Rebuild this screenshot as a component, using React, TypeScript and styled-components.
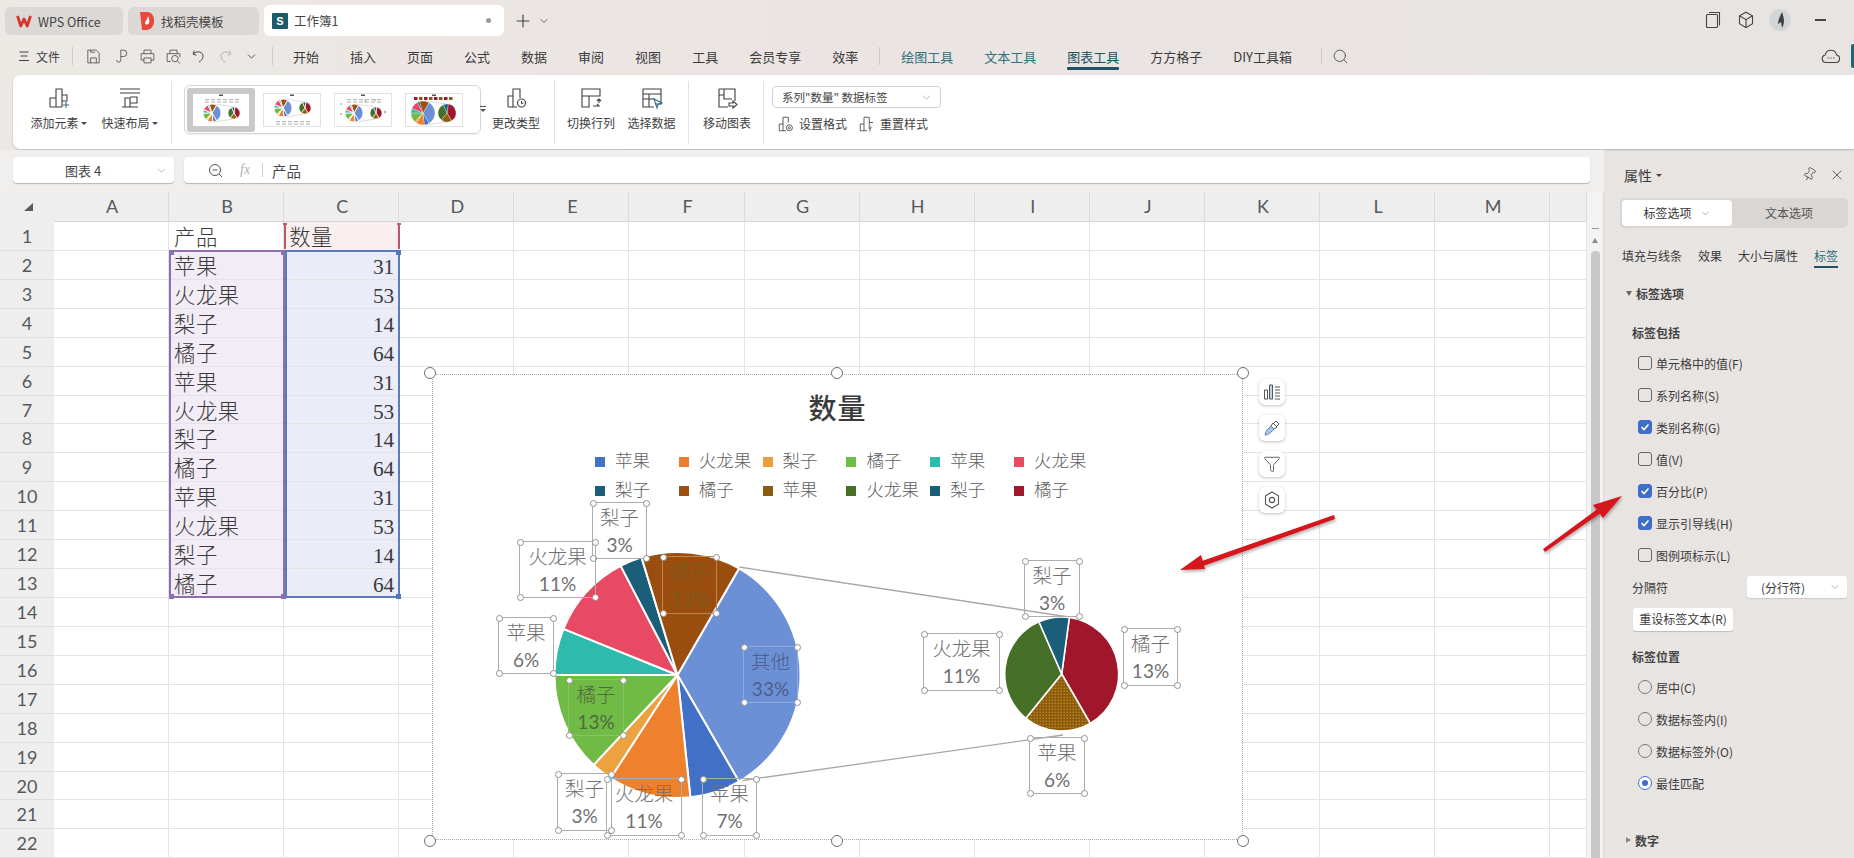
import React from "react";
import styled, { createGlobalStyle } from "styled-components";
import { ChevronDown, Plus, Search, X, Pin, Funnel } from "lucide-react";

const CJK = `"Noto Sans CJK SC", "Noto Sans", sans-serif`;
const SHEET_FONT = `"Liberation Serif", "Noto Sans CJK SC", serif`;
const LABEL_FONT = `Lato, "Noto Sans CJK SC", sans-serif`;

const GlobalStyle = createGlobalStyle`
  html, body { margin: 0; padding: 0; overflow: hidden; }
  body { font-family: ${CJK}; color: #333; }
`;

const Page = styled.div`
  position: relative;
  width: 1854px;
  height: 858px;
  overflow: hidden;
  display: flex;
  flex-direction: column;
  background: linear-gradient(90deg, #ece9e5 0%, #ebe4e2 45%, #e7e4e2 100%);
`;

/* title bar */
const TitleBar = styled.div`
  height: 40px;
  flex: none;
  display: flex;
  align-items: flex-start;
  padding: 6px 24px 0 5px;
  box-sizing: border-box;
`;

const Tab = styled.div<{ $w: number; $active?: boolean }>`
  width: ${(p) => p.$w}px;
  height: ${(p) => (p.$active ? 31 : 28)}px;
  margin: ${(p) => (p.$active ? "-1px 0 0 5px" : "1px 0 0 5px")};
  background: ${(p) => (p.$active ? "#fff" : "#dcd8d5")};
  border-radius: 6px;
  display: flex;
  align-items: center;
  gap: 6px;
  padding-left: ${(p) => (p.$active ? 8 : 11)}px;
  box-sizing: border-box;
  font-size: 12.5px;
  color: #444;
  &:first-child { margin-left: 0; }
`;

const SheetBadge = styled.div`
  width: 16px;
  height: 16px;
  background: #1c5b6b;
  color: #fff;
  font: 700 11px/16px "Liberation Sans", sans-serif;
  text-align: center;
  border-radius: 1px;
`;

const UnsavedDot = styled.span`
  width: 5px;
  height: 5px;
  border-radius: 50%;
  background: #9a9a9a;
  margin-left: auto;
  margin-right: 13px;
`;

const NewTab = styled.div`
  display: flex;
  align-items: center;
  gap: 5px;
  height: 30px;
  margin-left: 9px;
  color: #444;
`;

const WindowTools = styled.div`
  margin-left: auto;
  height: 28px;
  display: flex;
  align-items: center;
  color: #444;
`;

const WindowCell = styled.div<{ $w: number; $gap: number }>`
  width: ${(p) => p.$w}px;
  margin-left: ${(p) => p.$gap}px;
  display: flex;
  justify-content: center;
`;

const Avatar = styled.div`
  width: 22px;
  height: 22px;
  border-radius: 50%;
  background: #d3d6d6;
  display: flex;
  align-items: center;
  justify-content: center;
`;

const Minimize = styled.div`
  width: 11px;
  height: 1.5px;
  background: #444;
`;

/* menu bar */
const MenuBar = styled.div`
  height: 35px;
  flex: none;
  display: flex;
  align-items: center;
  padding: 0 0 3px 18px;
  box-sizing: border-box;
  font-size: 13px;
  color: #3c3c3c;
`;

const FileText = styled.span`
  font-size: 12px;
  margin-left: 6px;
`;

const MenuDivider = styled.div<{ $left: number; $right: number }>`
  width: 1px;
  height: 18px;
  background: #cfcac7;
  margin: 0 ${(p) => p.$right}px 0 ${(p) => p.$left}px;
`;

const QuickIcon = styled.div<{ $disabled?: boolean; $nudge?: number }>`
  width: 26px;
  margin-left: ${(p) => p.$nudge || 0}px;
  display: flex;
  justify-content: center;
  color: ${(p) => (p.$disabled ? "#b5b1ae" : "#444")};
`;

const MenuItem = styled.div<{ $tool?: boolean; $active?: boolean }>`
  position: relative;
  margin-right: 31px;
  white-space: nowrap;
  color: ${(p) => (p.$active ? "#17505f" : p.$tool ? "#2f7280" : "#3c3c3c")};
  ${(p) =>
    p.$active &&
    `&::after { content: ""; position: absolute; left: 0; right: 0; bottom: -4px; height: 2.5px; background: #1f5364; border-radius: 1px; }`}
`;

const CloudSlot = styled.div`
  margin-left: auto;
  display: flex;
  align-items: center;
  gap: 10px;
  color: #444;
`;

const CornerButton = styled.div`
  width: 3px;
  height: 24px;
  background: #1c6b75;
  border-radius: 2px 0 0 2px;
`;

/* ribbon */
const Ribbon = styled.div`
  height: 74px;
  flex: none;
  margin-left: 13px;
  padding: 6px 0 5px 10px;
  box-sizing: border-box;
  background: #fff;
  border-radius: 7px 0 0 7px;
  box-shadow: 0 1px 2px rgba(0, 0, 0, 0.22);
  display: flex;
  align-items: stretch;
`;

const BigButton = styled.div<{ $w: number }>`
  width: ${(p) => p.$w}px;
  display: flex;
  flex-direction: column;
  align-items: center;
  padding-top: 5px;
  color: #3e3e3e;
`;

const BigLabel = styled.div`
  margin-top: 4px;
  font-size: 12px;
  line-height: 18px;
  white-space: nowrap;
  display: flex;
  align-items: center;
  gap: 2px;
`;

const Caret = styled.span`
  width: 0;
  height: 0;
  border: 3px solid transparent;
  border-top: 3.5px solid #444;
  margin-top: 3px;
`;

const RibbonDivider = styled.div<{ $left: number; $right: number }>`
  width: 1px;
  background: #e2e2e2;
  margin: 0 ${(p) => p.$right}px 0 ${(p) => p.$left}px;
`;

const StyleGallery = styled.div`
  width: 297px;
  height: 49px;
  margin-top: 4px;
  box-sizing: border-box;
  border: 1px solid #d5d5d5;
  border-radius: 6px;
  display: flex;
  align-items: center;
  padding-left: 2px;
  box-shadow: 0 1px 1px rgba(0, 0, 0, 0.06);
`;

const Thumb = styled.div<{ $selected?: boolean }>`
  width: 56px;
  height: 32px;
  flex: none;
  box-sizing: content-box;
  border: ${(p) => (p.$selected ? "6px solid #c9c9c9" : "1px solid #e2e2e2")};
  border-radius: ${(p) => (p.$selected ? 3 : 0)}px;
  margin-right: ${(p) => (p.$selected ? 8 : 13)}px;
  background: #fff;
`;

const GalleryMore = styled.div`
  margin-left: 4px;
  width: 7px;
  height: 6px;
  border-top: 1px solid #555;
  display: flex;
  justify-content: center;
  &::after {
    content: "";
    margin-top: 1.5px;
    border: 3px solid transparent;
    border-top: 3.5px solid #555;
  }
`;

const SeriesColumn = styled.div`
  width: 170px;
  margin-top: 5px;
  display: flex;
  flex-direction: column;
  gap: 6px;
`;

const SeriesSelect = styled.div`
  height: 22px;
  width: 169px;
  box-sizing: border-box;
  background: #fff;
  border: 1px solid #d2d2d2;
  border-radius: 4px;
  font-size: 11.5px;
  line-height: 20px;
  padding: 0 7px 0 9px;
  display: flex;
  align-items: center;
  justify-content: space-between;
  color: #444;
`;

const SmallActions = styled.div`
  display: flex;
  font-size: 12px;
  line-height: 20px;
  color: #3e3e3e;
  padding-left: 5px;
`;

const SmallAction = styled.div<{ $w: number }>`
  width: ${(p) => p.$w}px;
  display: flex;
  align-items: center;
  gap: 4px;
  white-space: nowrap;
`;

/* body */
const Body = styled.div`
  flex: 1;
  min-height: 0;
  margin-top: 1px;
  display: grid;
  grid-template-columns: 1604px 250px;
`;

const Workspace = styled.div`
  display: flex;
  flex-direction: column;
  min-width: 0;
  background: #f1efee;
`;

const FormulaRow = styled.div`
  height: 42px;
  flex: none;
  padding: 7px 14px 9px 13px;
  box-sizing: border-box;
  display: flex;
  gap: 10px;
  font-size: 13px;
`;

const NameBox = styled.div`
  width: 161px;
  background: #fff;
  border-radius: 4px;
  box-shadow: 0 1px 1px rgba(0, 0, 0, 0.25);
  display: flex;
  align-items: center;
  padding: 0 6px 0 52px;
  box-sizing: border-box;
  justify-content: space-between;
  color: #444;
`;

const FormulaInput = styled.div`
  flex: 1;
  background: #fff;
  border-radius: 4px;
  box-shadow: 0 1px 1px rgba(0, 0, 0, 0.25);
  display: flex;
  align-items: center;
  padding-left: 24px;
  color: #555;
`;

const Fx = styled.span`
  font: italic 14px "Liberation Serif", serif;
  color: #b3b3b3;
  margin-left: 17px;
`;

const FormulaDivider = styled.span`
  width: 1px;
  height: 14px;
  background: #cfcfcf;
  margin: 0 9px 0 12px;
`;

const FormulaText = styled.span`
  font-size: 14.5px;
  color: #4a4a4a;
`;

const SheetWrap = styled.div`
  flex: 1;
  display: flex;
  min-height: 0;
`;

const Sheet = styled.div`
  position: relative;
  width: 1587px;
  flex: none;
  display: grid;
  grid-template-columns: 54px repeat(13, 115.1px) 36.7px;
  grid-template-rows: 30px repeat(22, 28.93px);
  background: #fff;
`;

const Corner = styled.div`
  background: #eeeeee;
  display: flex;
  align-items: center;
  justify-content: center;
  &::after {
    content: "";
    width: 0;
    height: 0;
    margin-left: 2px;
    border-style: solid;
    border-width: 0 0 8px 9px;
    border-color: transparent transparent #5c5c5c transparent;
  }
`;

const ColHead = styled.div`
  background: #eeeeee;
  border-right: 1px solid #dcdcdc;
  border-bottom: 1px solid #d5d5d5;
  box-sizing: border-box;
  font: 400 18px/29px Lato, sans-serif;
  color: #55595c;
  text-align: center;
  padding-left: 2px;
`;

const RowHead = styled.div`
  background: #eeeeee;
  border-bottom: 1px solid #dedede;
  box-sizing: border-box;
  font: 400 18px/29px Lato, sans-serif;
  color: #55595c;
  text-align: center;
`;

const Cell = styled.div<{ $bg?: string; $right?: boolean }>`
  background: ${(p) => p.$bg || "#fff"};
  border-right: 1px solid #e4e4e4;
  border-bottom: 1px solid #e4e4e4;
  box-sizing: border-box;
  font: 300 21.33px/28px ${SHEET_FONT};
  letter-spacing: ${(p) => (p.$right ? 0 : 0.5)}px;
  color: #3a3a3a;
  padding: 2px ${(p) => (p.$right ? 4 : 5)}px 0 5px;
  white-space: nowrap;
  text-align: ${(p) => (p.$right ? "right" : "left")};
`;

const Selection = styled.div<{ $x: number; $y: number; $w: number; $h: number; $color: string }>`
  position: absolute;
  left: ${(p) => p.$x}px;
  top: ${(p) => p.$y}px;
  width: ${(p) => p.$w}px;
  height: ${(p) => p.$h}px;
  box-sizing: border-box;
  border: 2px solid ${(p) => p.$color};
`;

const CornerHandle = styled.i<{ $x: string; $y: string; $color: string }>`
  position: absolute;
  left: ${(p) => p.$x};
  top: ${(p) => p.$y};
  width: 5px;
  height: 5px;
  margin: -2.5px 0 0 -2.5px;
  background: ${(p) => p.$color};
`;

const RedTick = styled.div<{ $x: number }>`
  position: absolute;
  left: ${(p) => p.$x}px;
  top: 31px;
  width: 2px;
  height: 26px;
  background: #b9566b;
  &::before {
    content: "";
    position: absolute;
    left: -1px;
    top: 0;
    width: 4px;
    height: 2px;
    background: #c9566b;
  }
`;

const ScrollTrack = styled.div`
  width: 17px;
  flex: none;
  background: #f3f3f3;
  border-right: 1px solid #dcdad8;
  box-sizing: border-box;
  display: flex;
  flex-direction: column;
  align-items: center;
  padding-top: 36px;
`;

const ScrollMinus = styled.div`
  width: 7px;
  height: 1px;
  background: #9a9a9a;
`;

const ScrollUp = styled.div`
  margin-top: 9px;
  border: 3.5px solid transparent;
  border-bottom: 5px solid #8a8a8a;
  border-top: 0;
`;

const ScrollThumb = styled.div`
  margin-top: 8px;
  flex: 1;
  width: 9px;
  border-radius: 4px 4px 0 0;
  background: #c8c8c8;
`;

/* chart */
const ChartBox = styled.div`
  position: absolute;
  left: 433px;
  top: 183px;
  width: 809px;
  height: 464px;
  box-sizing: border-box;
  background: #fff;
  outline: 1.5px dotted #a9a9a9;
  display: flex;
  flex-direction: column;
  align-items: flex-start;
`;

const ChartTitle = styled.div`
  width: 100%;
  margin-top: 15px;
  text-align: center;
  font: 500 28px/40px ${SHEET_FONT};
  color: #3b3b3b;
  letter-spacing: 1px;
`;

const Legend = styled.div`
  margin: 17px 0 0 162px;
  display: grid;
  grid-template-columns: repeat(6, 83.8px);
  grid-auto-rows: 29px;
  font: 300 17.5px/29px ${SHEET_FONT};
  color: #606060;
`;

const LegendItem = styled.div`
  display: flex;
  align-items: center;
  gap: 10px;
  white-space: nowrap;
`;

const Swatch = styled.span<{ $color: string }>`
  width: 10px;
  height: 10px;
  flex: none;
  background: ${(p) => p.$color};
`;

const ChartArt = styled.svg`
  position: absolute;
  left: 0;
  top: 0;
  width: 809px;
  height: 464px;
  overflow: visible;
`;

const SizeHandle = styled.div<{ $x: number; $y: number }>`
  position: absolute;
  left: ${(p) => p.$x}px;
  top: ${(p) => p.$y}px;
  width: 12px;
  height: 12px;
  box-sizing: border-box;
  margin: -6px 0 0 -6px;
  border-radius: 50%;
  background: #fff;
  border: 1px solid #6f6f6f;
`;

const DataLabel = styled.div<{ $x: number; $y: number; $w: number; $h: number; $tone: string; $line: string }>`
  position: absolute;
  left: ${(p) => p.$x}px;
  top: ${(p) => p.$y}px;
  width: ${(p) => p.$w}px;
  height: ${(p) => p.$h}px;
  box-sizing: border-box;
  padding-top: 2px;
  border: 1px solid ${(p) => p.$line};
  display: flex;
  flex-direction: column;
  align-items: center;
  justify-content: center;
  color: ${(p) => p.$tone};
  white-space: nowrap;
`;

const LabelName = styled.div`
  font: 300 19.5px/26px ${SHEET_FONT};
`;

const LabelValue = styled.div`
  font: 400 19px/26px ${LABEL_FONT};
`;

const LabelDot = styled.i<{ $x: string; $y: string }>`
  position: absolute;
  left: ${(p) => p.$x};
  top: ${(p) => p.$y};
  width: 7px;
  height: 7px;
  box-sizing: border-box;
  margin: -3.5px 0 0 -3.5px;
  border-radius: 50%;
  background: #fff;
  border: 1px solid #8f8f8f;
`;

const ChartTools = styled.div`
  position: absolute;
  left: 1259px;
  top: 187px;
  display: flex;
  flex-direction: column;
  gap: 10px;
`;

const ChartTool = styled.div`
  width: 26px;
  height: 26px;
  background: #fff;
  border-radius: 6px;
  box-shadow: 0 1px 3px rgba(0, 0, 0, 0.25);
  display: flex;
  align-items: center;
  justify-content: center;
  color: #4d4d4d;
`;

/* properties panel */
const Panel = styled.aside`
  display: flex;
  flex-direction: column;
  padding: 10px 6px 0 16px;
  font-size: 12px;
  color: #3a3a3a;
`;

const PanelHead = styled.div`
  height: 30px;
  flex: none;
  display: flex;
  align-items: center;
  padding-left: 4px;
  font-size: 14px;
  gap: 4px;
`;

const PanelHeadTools = styled.div`
  margin-left: auto;
  display: flex;
  gap: 12px;
  padding-right: 3px;
  color: #444;
`;

const PinIcon = styled(Pin)`
  transform: rotate(30deg);
`;

const Segment = styled.div`
  margin-top: 8px;
  height: 30px;
  width: 228px;
  flex: none;
  background: #d9d6d4;
  border-radius: 5px;
  padding: 2px;
  box-sizing: border-box;
  display: flex;
  color: #555;
  line-height: 26px;
`;

const SegmentOn = styled.div`
  width: 110px;
  background: #fff;
  border-radius: 4px;
  color: #333;
  display: flex;
  align-items: center;
  justify-content: center;
  gap: 8px;
`;

const SegmentOff = styled.div`
  flex: 1;
  text-align: center;
`;

const SubTabs = styled.div`
  margin-top: 7px;
  height: 40px;
  flex: none;
  display: flex;
  align-items: center;
  padding-left: 2px;
  gap: 16px;
`;

const SubTab = styled.div<{ $on?: boolean }>`
  position: relative;
  white-space: nowrap;
  color: ${(p) => (p.$on ? "#1f6a78" : "#3a3a3a")};
  ${(p) =>
    p.$on &&
    `&::after { content: ""; position: absolute; left: 0; right: 0; bottom: -4px; height: 2px; background: #1f5364; }`}
`;

const SectionHead = styled.div<{ $top: number }>`
  margin-top: ${(p) => p.$top}px;
  height: 20px;
  flex: none;
  display: flex;
  align-items: center;
  gap: 4px;
  padding-left: 6px;
  font-weight: 700;
  color: #444;
`;

const Triangle = styled.span<{ $open?: boolean }>`
  width: 0;
  height: 0;
  ${(p) =>
    p.$open
      ? "border-left: 3.5px solid transparent; border-right: 3.5px solid transparent; border-top: 5px solid #666;"
      : "border-top: 3.5px solid transparent; border-bottom: 3.5px solid transparent; border-left: 5px solid #888;"}
`;

const GroupHead = styled.div<{ $top: number }>`
  margin-top: ${(p) => p.$top}px;
  height: 20px;
  flex: none;
  line-height: 20px;
  padding-left: 12px;
  font-weight: 700;
  color: #444;
`;

const OptionList = styled.div`
  margin-top: 4px;
  flex: none;
  display: flex;
  flex-direction: column;
`;

const Option = styled.div`
  height: 32px;
  display: flex;
  align-items: center;
  gap: 4px;
  padding-left: 18px;
  white-space: nowrap;
`;

const Check = styled.span<{ $on?: boolean }>`
  width: 14px;
  height: 14px;
  box-sizing: border-box;
  flex: none;
  border-radius: 3px;
  border: 1px solid ${(p) => (p.$on ? "#3d6fc6" : "#666")};
  background: ${(p) => (p.$on ? "#3d6fc6" : "transparent")};
  display: flex;
  align-items: center;
  justify-content: center;
`;

const Radio = styled.span<{ $on?: boolean }>`
  width: 14px;
  height: 14px;
  box-sizing: border-box;
  flex: none;
  border-radius: 50%;
  border: 1px solid ${(p) => (p.$on ? "#3d6fc6" : "#777")};
  background: ${(p) => (p.$on ? "#fff" : "transparent")};
  display: flex;
  align-items: center;
  justify-content: center;
  &::after {
    content: "";
    width: 6px;
    height: 6px;
    border-radius: 50%;
    background: ${(p) => (p.$on ? "#3d6fc6" : "transparent")};
  }
`;

const SeparatorRow = styled.div`
  margin-top: 5px;
  height: 22px;
  flex: none;
  padding-left: 12px;
  display: flex;
  align-items: center;
  justify-content: space-between;
  padding-right: 1px;
`;

const SeparatorSelect = styled.div`
  width: 100px;
  height: 22px;
  background: #fff;
  border-radius: 3px;
  box-shadow: 0 1px 1px rgba(0, 0, 0, 0.12);
  display: flex;
  align-items: center;
  justify-content: space-between;
  padding: 0 6px 0 14px;
  box-sizing: border-box;
`;

const ResetButton = styled.div`
  margin: 10px 0 0 13px;
  width: 100px;
  height: 23px;
  flex: none;
  background: #fff;
  border-radius: 3px;
  box-shadow: 0 1px 1px rgba(0, 0, 0, 0.18);
  text-align: center;
  line-height: 22px;
`;

const Annotations = styled.svg`
  position: absolute;
  left: 0;
  top: 0;
  width: 1854px;
  height: 858px;
  pointer-events: none;
`;

/* drawing helpers */
const pt = (cx: number, cy: number, r: number, deg: number) => {
  const a = (deg * Math.PI) / 180;
  return [cx + r * Math.sin(a), cy - r * Math.cos(a)];
};

const wedge = (cx: number, cy: number, r: number, from: number, to: number) => {
  const [x1, y1] = pt(cx, cy, r, from);
  const [x2, y2] = pt(cx, cy, r, to);
  const large = to - from > 180 ? 1 : 0;
  return `M${cx} ${cy}L${x1.toFixed(2)} ${y1.toFixed(2)}A${r} ${r} 0 ${large} 1 ${x2.toFixed(2)} ${y2.toFixed(2)}Z`;
};

type Slice = { from: number; to: number; fill: string };

const mainSlices: Slice[] = [
  { from: 30, to: 150, fill: "#6c90d5" },
  { from: 150, to: 174, fill: "#4170c6" },
  { from: 174, to: 213, fill: "#ee812e" },
  { from: 213, to: 223, fill: "#eba23f" },
  { from: 223, to: 270, fill: "#70bb45" },
  { from: 270, to: 292, fill: "#2ebbae" },
  { from: 292, to: 332.5, fill: "#e94a63" },
  { from: 332.5, to: 343, fill: "#1b5e7a" },
  { from: 343, to: 390, fill: "url(#brownDots)" },
];

const subSlices: Slice[] = [
  { from: 7.7, to: 150, fill: "#a0162a" },
  { from: 150, to: 219, fill: "url(#goldDots)" },
  { from: 219, to: 336.5, fill: "#467028" },
  { from: 336.5, to: 367.7, fill: "#1b5e7a" },
];

const flat = (list: Slice[]) =>
  list.map((s) => ({ ...s, fill: s.fill === "url(#brownDots)" ? "#9c4f0e" : s.fill === "url(#goldDots)" ? "#8f5f10" : s.fill }));

const Pie = ({ cx, cy, r, slices, gap }: { cx: number; cy: number; r: number; slices: Slice[]; gap: number }) => (
  <g stroke="#fff" strokeWidth={gap} strokeLinejoin="round">
    {slices.map((s, i) => (
      <path key={i} d={wedge(cx, cy, r, s.from, s.to)} fill={s.fill} />
    ))}
  </g>
);

const legendRows = [
  ["苹果", "#4472c4"],
  ["火龙果", "#ed7d31"],
  ["梨子", "#eba03e"],
  ["橘子", "#6fbd44"],
  ["苹果", "#2ebbae"],
  ["火龙果", "#e94a63"],
  ["梨子", "#1b5e7a"],
  ["橘子", "#9c4f0e"],
  ["苹果", "#8a5a0e"],
  ["火龙果", "#467028"],
  ["梨子", "#1b5e7a"],
  ["橘子", "#a0162a"],
];

const GREY = "#707070";
const LINE = "#adadad";

// page coordinates read off the reference, moved into the chart below
const chartLabels = [
  { name: "梨子", pct: "3%", x: 592, y: 502, w: 55, h: 57, tone: GREY, line: LINE },
  { name: "火龙果", pct: "11%", x: 519, y: 541, w: 77, h: 57, tone: GREY, line: LINE },
  { name: "橘子", pct: "13%", x: 662, y: 556, w: 55, h: 58, tone: "#7d5a1e", line: "#b98a4e" },
  { name: "苹果", pct: "6%", x: 498, y: 617, w: 56, h: 57, tone: GREY, line: LINE },
  { name: "橘子", pct: "13%", x: 568, y: 679, w: 56, h: 57, tone: "#4f6b3d", line: "#8dc26b" },
  { name: "其他", pct: "33%", x: 743, y: 646, w: 55, h: 57, tone: "#4a5f8c", line: "#8eaae0" },
  { name: "梨子", pct: "3%", x: 557, y: 773, w: 55, h: 58, tone: GREY, line: LINE },
  { name: "火龙果", pct: "11%", x: 606, y: 778, w: 76, h: 58, tone: GREY, line: LINE },
  { name: "苹果", pct: "7%", x: 702, y: 778, w: 55, h: 58, tone: GREY, line: LINE },
  { name: "梨子", pct: "3%", x: 1024, y: 560, w: 56, h: 57, tone: GREY, line: LINE },
  { name: "火龙果", pct: "11%", x: 923, y: 633, w: 77, h: 58, tone: GREY, line: LINE },
  { name: "橘子", pct: "13%", x: 1123, y: 628, w: 55, h: 58, tone: GREY, line: LINE },
  { name: "苹果", pct: "6%", x: 1029, y: 737, w: 56, h: 57, tone: GREY, line: LINE },
];

const sheetRows: [string, number][] = [
  ["苹果", 31],
  ["火龙果", 53],
  ["梨子", 14],
  ["橘子", 64],
  ["苹果", 31],
  ["火龙果", 53],
  ["梨子", 14],
  ["橘子", 64],
  ["苹果", 31],
  ["火龙果", 53],
  ["梨子", 14],
  ["橘子", 64],
];

const COLUMNS = ["A", "B", "C", "D", "E", "F", "G", "H", "I", "J", "K", "L", "M", ""];

const Stroke = ({ size = 24, children }: { size?: number; children: React.ReactNode }) => (
  <svg width={size} height={size} viewBox="0 0 24 24" fill="none" stroke="currentColor" strokeWidth={1.1}>
    {children}
  </svg>
);

const MiniChart = ({ variant }: { variant: number }) => {
  const big = variant === 3;
  const cxL = big ? 17 : 19;
  const cxR = 41;
  const cy = variant === 1 ? 14 : 19;
  const rL = big ? 12 : 9;
  const rR = big ? 9 : 6;
  return (
    <svg width="56" height="32" viewBox="0 0 56 32">
      <rect x="26" y="0.5" width="4" height="1.5" fill="#555" />
      {variant !== 3 && (
        <g fill="#b9b9b9">
          {[12, 18, 24, 30, 36, 42].map((x) => (
            <rect key={x} x={x} y={variant === 1 ? 27 : 5} width="4" height="1.2" />
          ))}
          {[12, 18, 24, 30, 36, 42].map((x) => (
            <rect key={x} x={x} y={variant === 1 ? 29.5 : 7.5} width="4" height="1.2" />
          ))}
        </g>
      )}
      {big && (
        <g>
          {[8, 13, 18, 23, 28, 33, 38, 43].map((x, i) => (
            <rect key={x} x={x} y="3" width="3.5" height="3" fill={i % 2 ? "#8a5a0e" : "#a0162a"} />
          ))}
        </g>
      )}
      <path d={`M${cxL + 2} ${cy - rL}L${cxR} ${cy - rR}M${cxL + 2} ${cy + rL}L${cxR} ${cy + rR}`} stroke="#bbb" strokeWidth="0.5" />
      <Pie cx={cxL} cy={cy} r={rL} slices={flat(mainSlices)} gap={variant === 3 ? 0.3 : 0.9} />
      <Pie cx={cxR} cy={cy} r={rR} slices={flat(subSlices)} gap={variant === 3 ? 0.3 : 0.7} />
      {variant === 2 && (
        <g fill="#9fb4d8">
          <circle cx="6" cy="10" r="1" />
          <circle cx="6" cy="20" r="1" />
          <circle cx="30" cy="7" r="1" />
          <circle cx="50" cy="18" r="1.2" />
          <circle cx="40" cy="6" r="1" />
        </g>
      )}
    </svg>
  );
};

const App = () => {
  return (
    <Page>
      <GlobalStyle />
      <TitleBar>
        <Tab $w={118}>
          <svg width="16" height="14" viewBox="0 0 16 14">
            <path d="M1.5 2 L4.8 12 L8 5 L11.2 12 L14.5 2" fill="none" stroke="#d8352b" strokeWidth="2.8" strokeLinejoin="round" />
          </svg>
          <span>WPS Office</span>
        </Tab>
        <Tab $w={131}>
          <svg width="16" height="20" viewBox="0 0 16 20">
            <path d="M1 1h7c5 0 7 4 7 9s-3 9-8 9H3z" fill="#e5493a" />
            <path d="M9 5c0 3-3 5-3 7 0 2 3 2 4 0 1-2 0-5-1-7z" fill="#fff" />
          </svg>
          <span>找稻壳模板</span>
        </Tab>
        <Tab $w={240} $active>
          <SheetBadge>S</SheetBadge>
          <span>工作簿1</span>
          <UnsavedDot />
        </Tab>
        <NewTab>
          <Plus size={20} strokeWidth={1.4} />
          <ChevronDown size={12} strokeWidth={1.6} />
        </NewTab>
        <WindowTools>
          <WindowCell $w={20} $gap={0}>
            <svg width="16" height="18" viewBox="0 0 16 18" fill="none" stroke="currentColor" strokeWidth="1.1">
              <rect x="1.5" y="3.5" width="11" height="13" rx="1" />
              <path d="M4 1.5h10.5v13" />
            </svg>
          </WindowCell>
          <WindowCell $w={20} $gap={13}>
            <svg width="16" height="18" viewBox="0 0 16 18" fill="none" stroke="currentColor" strokeWidth="1.1">
              <path d="M8 1.2l6.5 3.6v8L8 16.6l-6.5-3.8v-8zM1.5 4.8L8 8.6l6.5-3.8M8 8.6v8" />
            </svg>
          </WindowCell>
          <WindowCell $w={24} $gap={12}>
            <Avatar>
              <svg width="14" height="18" viewBox="0 0 14 18">
                <path d="M9 1c1 3 2 6 2 9s-1 5-2 7l-1-6-3 2c0-4 2-8 4-12z" fill="#3f4245" />
              </svg>
            </Avatar>
          </WindowCell>
          <WindowCell $w={20} $gap={18}>
            <Minimize />
          </WindowCell>
        </WindowTools>
      </TitleBar>

      <MenuBar>
        <svg width="12" height="12" viewBox="0 0 12 12" stroke="#444" strokeWidth="1.1">
          <path d="M1.5 2h9M2.5 6h7M1 10.5h10" />
        </svg>
        <FileText>文件</FileText>
        <MenuDivider $left={12} $right={7} />
        <QuickIcon>
          <Stroke size={17}>
            <path d="M4 3h12l4 4v14H4zM8 21v-7h8v7M8 3v3h6" />
          </Stroke>
        </QuickIcon>
        <QuickIcon $nudge={2}>
          <Stroke size={17}>
            <path d="M11 3h4a4 4 0 010 9h-4zM11 12v5a3 3 0 01-6 0" />
          </Stroke>
        </QuickIcon>
        <QuickIcon>
          <Stroke size={17}>
            <path d="M7 8V3h10v5M3 8h18v9h-4M7 17H3V8M7 14h10v7H7z" />
          </Stroke>
        </QuickIcon>
        <QuickIcon>
          <Stroke size={17}>
            <path d="M7 8V3h10v5M3 8h18v5M8 19H3V8" />
            <circle cx="14" cy="15" r="4.5" />
            <path d="M17.5 18.5L21 22" />
          </Stroke>
        </QuickIcon>
        <QuickIcon>
          <Stroke size={16}>
            <path d="M5 4l-2 5 5 2M3.5 9C9 3 19 6 18 13c-.5 4-3 6-6 8" strokeWidth="1.5" />
          </Stroke>
        </QuickIcon>
        <QuickIcon $disabled>
          <Stroke size={16}>
            <path d="M19 4l2 5-5 2M20.5 9C15 3 5 6 6 13c.5 4 3 6 6 8" strokeWidth="1.5" />
          </Stroke>
        </QuickIcon>
        <QuickIcon>
          <ChevronDown size={13} strokeWidth={1.6} />
        </QuickIcon>
        <MenuDivider $left={8} $right={20} />
        {["开始", "插入", "页面", "公式", "数据", "审阅", "视图", "工具", "会员专享", "效率"].map((t) => (
          <MenuItem key={t}>{t}</MenuItem>
        ))}
        <MenuDivider $left={-10} $right={21} />
        <MenuItem $tool>绘图工具</MenuItem>
        <MenuItem $tool>文本工具</MenuItem>
        <MenuItem $active>图表工具</MenuItem>
        <MenuItem>方方格子</MenuItem>
        <MenuItem>DIY工具箱</MenuItem>
        <MenuDivider $left={-2} $right={10} />
        <Search size={17} strokeWidth={1.2} color="#444" />
        <CloudSlot>
          <svg width="20" height="18" viewBox="0 0 20 18" fill="none" stroke="currentColor" strokeWidth="1.1">
            <path d="M5 15.5a3.8 3.8 0 01-.8-7.5 5.8 5.8 0 0111.4 0 3.8 3.8 0 01-.6 7.5z" />
            <path d="M6.8 11h.8M9.6 11h.8M12.4 11h.8" strokeWidth="1.4" />
          </svg>
          <CornerButton />
        </CloudSlot>
      </MenuBar>

      <Ribbon>
        <BigButton $w={71}>
          <Stroke>
            <path d="M3 21v-9h6V3h6v6h5v6h-5M3 21h12M9 12v9M15 3v18" />
            <path d="M19 16v6M16 19h6" stroke="#2f7280" />
          </Stroke>
          <BigLabel>
            添加元素
            <Caret />
          </BigLabel>
        </BigButton>
        <BigButton $w={71}>
          <Stroke>
            <path d="M2 3h20M2 7h20M4 21h16M7 21v-9h5v9M12 11h7v6h-7" />
          </Stroke>
          <BigLabel>
            快速布局
            <Caret />
          </BigLabel>
        </BigButton>
        <RibbonDivider $left={6} $right={12} />
        <StyleGallery>
          <Thumb $selected>
            <MiniChart variant={0} />
          </Thumb>
          <Thumb>
            <MiniChart variant={1} />
          </Thumb>
          <Thumb>
            <MiniChart variant={2} />
          </Thumb>
          <Thumb>
            <MiniChart variant={3} />
          </Thumb>
          <GalleryMore />
        </StyleGallery>
        <BigButton $w={70}>
          <Stroke>
            <path d="M4 21V10h5V3h7v9M4 21h9M9 10v11" />
            <circle cx="17.5" cy="17" r="4" />
            <path d="M17.5 15v2.2h2" />
          </Stroke>
          <BigLabel>更改类型</BigLabel>
        </BigButton>
        <RibbonDivider $left={3} $right={6} />
        <BigButton $w={60}>
          <Stroke>
            <path d="M3 3h18v7H3zM3 10v11h7V10M14 20h6l-2-2M20 13v4M18 15l2-2 2 2" />
          </Stroke>
          <BigLabel>切换行列</BigLabel>
        </BigButton>
        <BigButton $w={61}>
          <Stroke>
            <path d="M3 3h18v15h-6M3 3v18h11M3 8h18M3 13h12M9 8v13" />
            <path d="M14 13l8 4-4 1.5-1 3.5z" stroke="#2f7280" />
          </Stroke>
          <BigLabel>选择数据</BigLabel>
        </BigButton>
        <RibbonDivider $left={6} $right={8} />
        <BigButton $w={60}>
          <Stroke>
            <path d="M4 3h16v12M4 3v18h9M9 3v10h8M4 9h5" />
            <path d="M14 17h4v-2l4 3.5-4 3.5v-2h-4z" />
          </Stroke>
          <BigLabel>移动图表</BigLabel>
        </BigButton>
        <RibbonDivider $left={6} $right={8} />
        <SeriesColumn>
          <SeriesSelect>
            系列"数量" 数据标签
            <ChevronDown size={13} strokeWidth={1.2} color="#888" />
          </SeriesSelect>
          <SmallActions>
            <SmallAction $w={81}>
              <Stroke size={18}>
                <path d="M3 21v-9h5V3h7v7M3 21h9M8 12v9" />
                <circle cx="16.5" cy="17" r="4" />
                <circle cx="16.5" cy="17" r="1.4" />
              </Stroke>
              设置格式
            </SmallAction>
            <SmallAction $w={80}>
              <Stroke size={18}>
                <path d="M3 21v-9h5V3h7v7h5M3 21h9M8 12v9M15 10v5M16 19v3" />
                <circle cx="16" cy="17" r="1.4" />
              </Stroke>
              重置样式
            </SmallAction>
          </SmallActions>
        </SeriesColumn>
      </Ribbon>

      <Body>
        <Workspace>
          <FormulaRow>
            <NameBox>
              <span>图表 4</span>
              <ChevronDown size={13} strokeWidth={1.2} color="#999" />
            </NameBox>
            <FormulaInput>
              <svg width="15" height="15" viewBox="0 0 15 15" fill="none" stroke="#555" strokeWidth="1">
                <circle cx="7" cy="7" r="5.5" />
                <path d="M11 11l3 3M4.5 7h5" />
              </svg>
              <Fx>fx</Fx>
              <FormulaDivider />
              <FormulaText>产品</FormulaText>
            </FormulaInput>
          </FormulaRow>
          <SheetWrap>
            <Sheet>
              <Corner />
              {COLUMNS.map((c, i) => (
                <ColHead key={i}>{c}</ColHead>
              ))}
              {Array.from({ length: 22 }, (_, r) => {
                const data = r >= 1 && r <= 12 ? sheetRows[r - 1] : null;
                return (
                  <React.Fragment key={r}>
                    <RowHead>{r + 1}</RowHead>
                    {COLUMNS.map((_c, c) => {
                      if (c === 1 && r === 0) return <Cell key={c}>产品</Cell>;
                      if (c === 2 && r === 0)
                        return (
                          <Cell key={c} $bg="#f8efee">
                            数量
                          </Cell>
                        );
                      if (c === 1 && data)
                        return (
                          <Cell key={c} $bg="#f1ecf6">
                            {data[0]}
                          </Cell>
                        );
                      if (c === 2 && data)
                        return (
                          <Cell key={c} $bg="#eaecf8" $right>
                            {data[1]}
                          </Cell>
                        );
                      return <Cell key={c} />;
                    })}
                  </React.Fragment>
                );
              })}

              <RedTick $x={284} />
              <RedTick $x={398} />
              <Selection $x={169} $y={58} $w={116} $h={348} $color="#8f6fb2">
                <CornerHandle $x="0" $y="0" $color="#8f6fb2" />
                <CornerHandle $x="100%" $y="0" $color="#8f6fb2" />
                <CornerHandle $x="0" $y="100%" $color="#8f6fb2" />
                <CornerHandle $x="100%" $y="100%" $color="#8f6fb2" />
              </Selection>
              <Selection $x={285} $y={58} $w={115} $h={348} $color="#5a7cb8">
                <CornerHandle $x="100%" $y="0" $color="#4f78bd" />
                <CornerHandle $x="100%" $y="100%" $color="#4f78bd" />
              </Selection>

              <ChartBox>
                <ChartTitle>数量</ChartTitle>
                <Legend>
                  {legendRows.map(([name, color], i) => (
                    <LegendItem key={i}>
                      <Swatch $color={color} />
                      {name}
                    </LegendItem>
                  ))}
                </Legend>
                <ChartArt viewBox="0 0 809 464">
                  <defs>
                    <pattern id="brownDots" width="3" height="3" patternUnits="userSpaceOnUse">
                      <rect width="3" height="3" fill="#9c4f0e" />
                      <circle cx="1" cy="1" r="0.6" fill="#86430b" />
                    </pattern>
                    <pattern id="goldDots" width="3" height="3" patternUnits="userSpaceOnUse">
                      <rect width="3" height="3" fill="#8a5a0e" />
                      <circle cx="1.2" cy="1.2" r="0.8" fill="#c58f1f" />
                    </pattern>
                  </defs>
                  <path d="M306 192L636 242M306 406L630 360" stroke="#a8a8a8" strokeWidth="1.3" fill="none" />
                  <Pie cx={244.5} cy={300} r={123} slices={mainSlices} gap={2} />
                  <Pie cx={628.7} cy={299} r={57} slices={subSlices} gap={1.6} />
                </ChartArt>
                {chartLabels.map((l, i) => (
                  <DataLabel key={i} $x={l.x - 433} $y={l.y - 375} $w={l.w} $h={l.h} $tone={l.tone} $line={l.line}>
                    <LabelName>{l.name}</LabelName>
                    <LabelValue>{l.pct}</LabelValue>
                    <LabelDot $x="0" $y="0" />
                    <LabelDot $x="100%" $y="0" />
                    <LabelDot $x="0" $y="100%" />
                    <LabelDot $x="100%" $y="100%" />
                  </DataLabel>
                ))}
                <SizeHandle $x={-3} $y={-2} />
                <SizeHandle $x={404} $y={-2} />
                <SizeHandle $x={810} $y={-2} />
                <SizeHandle $x={-3} $y={466} />
                <SizeHandle $x={404} $y={466} />
                <SizeHandle $x={810} $y={466} />
              </ChartBox>

              <ChartTools>
                <ChartTool>
                  <svg width="18" height="16" viewBox="0 0 18 16" fill="none" stroke="#555" strokeWidth="1">
                    <path d="M1.5 6h3v9h-3z" />
                    <path d="M6.5 1h3v14h-3z" fill="#b9d4ea" />
                    <path d="M12 3h5M12 6h5M12 9h5M12 12h5M12 15h5" />
                  </svg>
                </ChartTool>
                <ChartTool>
                  <svg width="18" height="18" viewBox="0 0 18 18" fill="none" stroke="#555" strokeWidth="1">
                    <path d="M10 4l4 4-3 2-3-3z" />
                    <path d="M8 7l3 3-4 4c-1.5 1.2-3.5 2-5 2 .5-2 1.2-3.7 2-5z" fill="#a9c6e8" stroke="#5f86b8" />
                    <path d="M11 4l2-2 3 3-2 2" />
                  </svg>
                </ChartTool>
                <ChartTool>
                  <Funnel size={18} strokeWidth={1.1} color="#444" />
                </ChartTool>
                <ChartTool>
                  <svg width="16" height="18" viewBox="0 0 16 18" fill="none" stroke="#555" strokeWidth="1.1">
                    <path d="M8 1l6.5 3.8v8.400L8 17l-6.5-3.800V4.800z" />
                    <circle cx="8" cy="9" r="2.6" />
                  </svg>
                </ChartTool>
              </ChartTools>
            </Sheet>
            <ScrollTrack>
              <ScrollMinus />
              <ScrollUp />
              <ScrollThumb />
            </ScrollTrack>
          </SheetWrap>
        </Workspace>

        <Panel>
          <PanelHead>
            属性
            <Caret />
            <PanelHeadTools>
              <PinIcon size={15} strokeWidth={1.2} />
              <X size={16} strokeWidth={1.2} />
            </PanelHeadTools>
          </PanelHead>
          <Segment>
            <SegmentOn>
              标签选项
              <ChevronDown size={11} strokeWidth={1.3} color="#777" />
            </SegmentOn>
            <SegmentOff>文本选项</SegmentOff>
          </Segment>
          <SubTabs>
            <SubTab>填充与线条</SubTab>
            <SubTab>效果</SubTab>
            <SubTab>大小与属性</SubTab>
            <SubTab $on>标签</SubTab>
          </SubTabs>
          <SectionHead $top={8}>
            <Triangle $open />
            标签选项
          </SectionHead>
          <GroupHead $top={20}>标签包括</GroupHead>
          <OptionList>
            {[
              ["单元格中的值(F)", false],
              ["系列名称(S)", false],
              ["类别名称(G)", true],
              ["值(V)", false],
              ["百分比(P)", true],
              ["显示引导线(H)", true],
              ["图例项标示(L)", false],
            ].map(([text, on]) => (
              <Option key={text as string}>
                <Check $on={on as boolean}>
                  {on && (
                    <svg width="10" height="10" viewBox="0 0 10 10" fill="none" stroke="#fff" strokeWidth="1.6">
                      <path d="M1.5 5l2.5 2.5 4.500-5" />
                    </svg>
                  )}
                </Check>
                {text}
              </Option>
            ))}
          </OptionList>
          <SeparatorRow>
            <span>分隔符</span>
            <SeparatorSelect>
              (分行符)
              <ChevronDown size={12} strokeWidth={1.2} color="#888" />
            </SeparatorSelect>
          </SeparatorRow>
          <ResetButton>重设标签文本(R)</ResetButton>
          <GroupHead $top={16}>标签位置</GroupHead>
          <OptionList>
            {["居中(C)", "数据标签内(I)", "数据标签外(O)", "最佳匹配"].map((t, i) => (
              <Option key={t}>
                <Radio $on={i === 3} />
                {t}
              </Option>
            ))}
          </OptionList>
          <SectionHead $top={31}>
            <Triangle />
            数字
          </SectionHead>
        </Panel>
      </Body>

      <Annotations viewBox="0 0 1854 858">
        <defs>
          <filter id="arrowShadow" x="-10%" y="-10%" width="120%" height="130%">
            <feDropShadow dx="1" dy="2" stdDeviation="1.5" floodColor="#000" floodOpacity="0.3" />
          </filter>
        </defs>
        <g fill="#d5131b" filter="url(#arrowShadow)">
          <path d="M1334 515L1202 561L1203 566L1335 519z" />
          <path d="M1180 570L1201 555L1205 569z" />
          <path d="M1543 549L1599 508L1602 512L1545 552z" />
          <path d="M1622 496L1593 505L1603 518z" />
        </g>
      </Annotations>
    </Page>
  );
};

export default App;
